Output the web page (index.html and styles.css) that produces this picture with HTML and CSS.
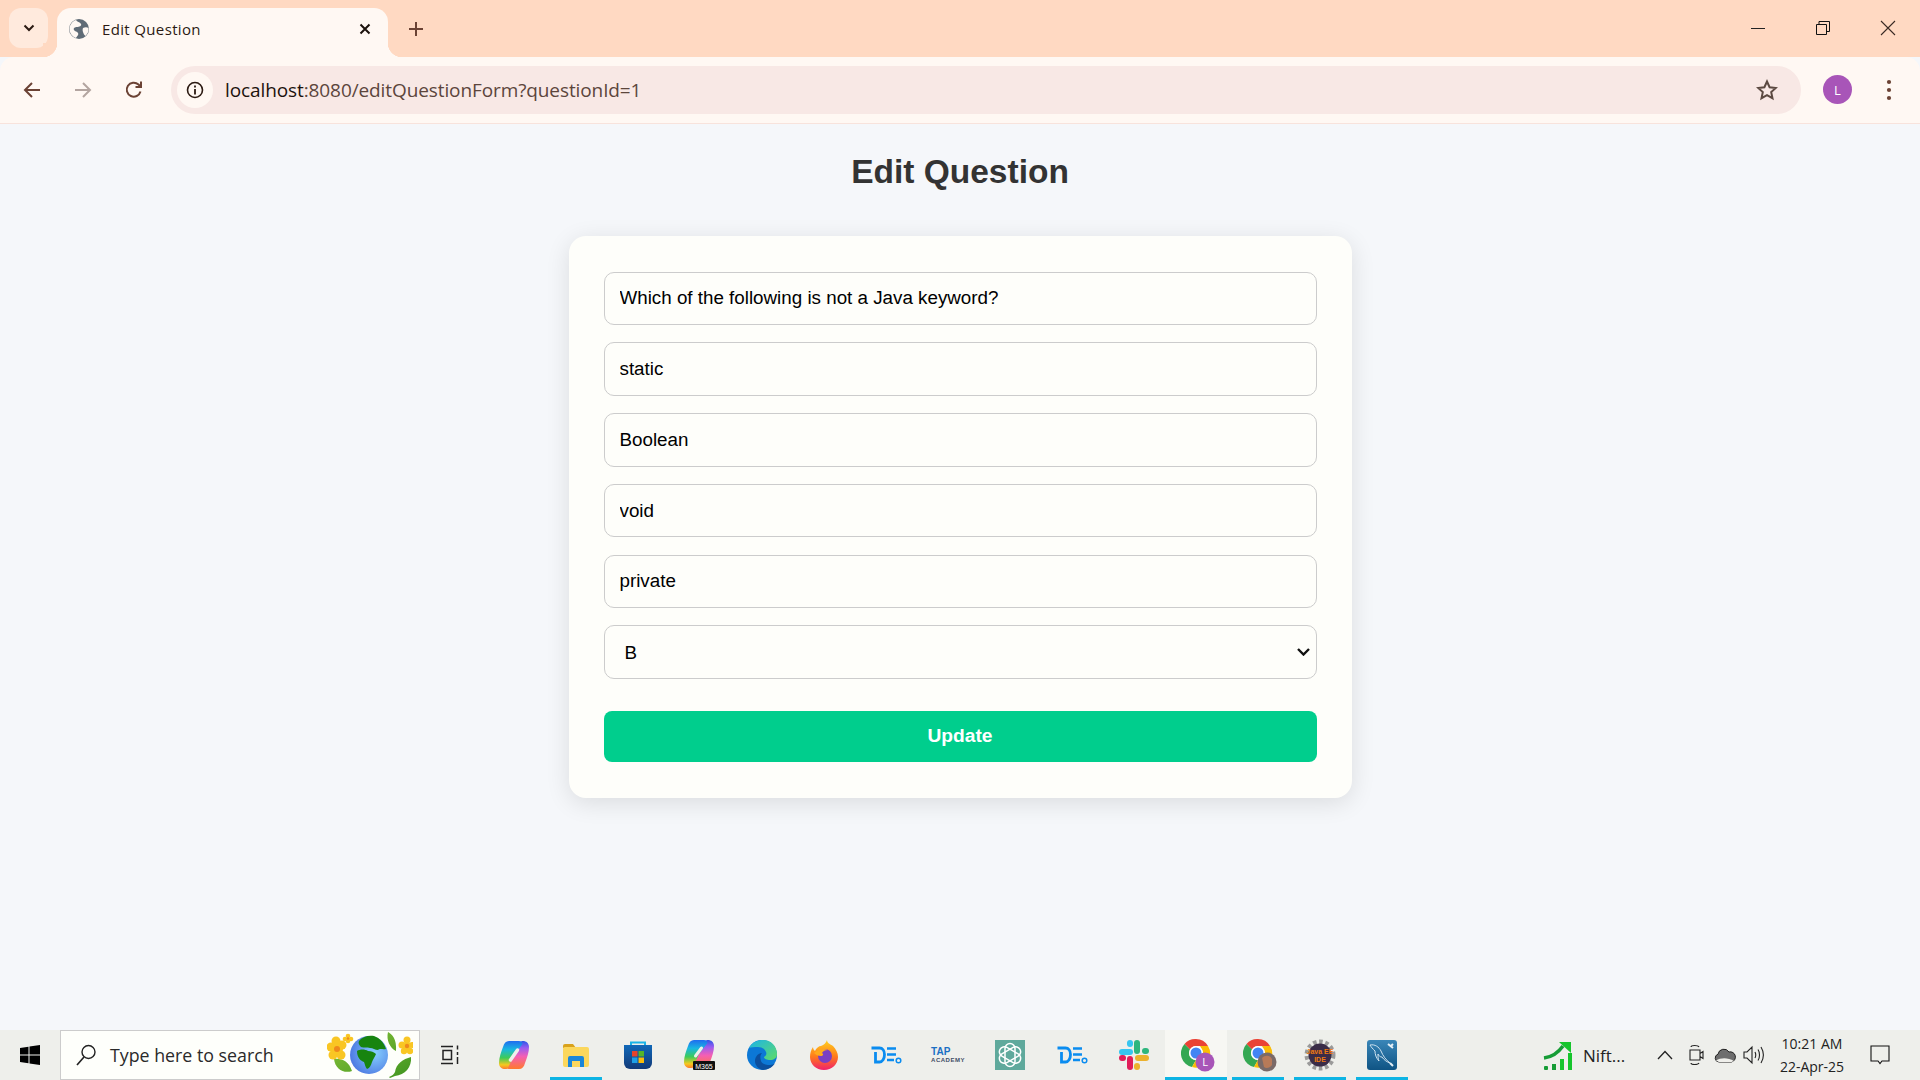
FILE: index.html
```html
<!DOCTYPE html>
<html lang="en">
<head>
  <meta charset="UTF-8" />
  <title>Edit Question</title>
  <link rel="stylesheet" href="styles.css">
</head>
<body>
  <header class="browser">
    <div class="tabstrip">
      <button class="tab-search">
        <svg width="14" height="14" viewBox="0 0 14 14"><path d="M2.5 4.5 7 9l4.500-4.500" fill="none" stroke="#2b1a12" stroke-width="2"/></svg>
      </button>
      <div class="tab">
        <svg class="favicon" width="20" height="20" viewBox="0 0 20 20"><circle cx="10" cy="10" r="10" fill="#5f6b76"/><path d="M7 1c1 2 4 2 5 4s-2 3-4 3-4 1-3 3 3 1 4 3-1 3-2 5c-3-1-6-4-6.500-8C0 7 3 2 7 1zM14 9c2-1 4-1 5.500 0 .5 3-1 6-3 8-1-1-2-2-2.500-4-.5-1-.5-3 0-4z" fill="#fff8f3"/></svg>
        <span class="tab-title">Edit Question</span>
        <svg class="tab-close" width="14" height="14" viewBox="0 0 14 14"><path d="M2.500 2.500l9 9m0-9-9 9" stroke="#1c120c" stroke-width="2"/></svg>
      </div>
      <svg class="new-tab" width="16" height="16" viewBox="0 0 16 16"><path d="M8 1v14M1 8h14" stroke="#6b4234" stroke-width="2"/></svg>
      <div class="window-btns">
        <svg width="16" height="16" viewBox="0 0 16 16"><path d="M1 8.500h14" stroke="#222" stroke-width="1"/></svg>
        <svg width="16" height="16" viewBox="0 0 16 16"><path d="M1.500 4.500h10v10h-10zM4 4.500V1.500h10.500v10h-3" fill="none" stroke="#111" stroke-width="1"/></svg>
        <svg width="16" height="16" viewBox="0 0 16 16"><path d="M1 1l14 14m0-14L1 15" stroke="#3a2a24" stroke-width="1.100"/></svg>
      </div>
    </div>
    <div class="toolbar">
      <svg class="nav-icon" width="20" height="20" viewBox="0 0 20 20"><path d="M18 10H3m7-7-7 7 7 7" fill="none" stroke="#6b4234" stroke-width="2"/></svg>
      <svg class="nav-icon" width="20" height="20" viewBox="0 0 20 20"><path d="M2 10h15m-7-7 7 7-7 7" fill="none" stroke="#b3a5a0" stroke-width="2"/></svg>
      <svg class="nav-icon" width="20" height="20" viewBox="0 0 20 20"><path d="M16.500 11.500A7 7 0 1 1 14.500 4.500L17 7M17 1.500V7h-5.500" fill="none" stroke="#6b4234" stroke-width="2"/></svg>
      <div class="omnibox">
        <span class="site-info">
          <svg width="18" height="18" viewBox="0 0 18 18"><circle cx="9" cy="9" r="7.500" fill="none" stroke="#2b1a12" stroke-width="1.600"/><path d="M9 8v5.500M9 4.500v2" stroke="#2b1a12" stroke-width="1.800"/></svg>
        </span>
        <span class="url"><b>localhost</b>:8080/editQuestionForm?questionId=1</span>
        <svg class="star" width="22" height="22" viewBox="0 0 22 22"><path d="M11 2.500l2.600 5.700 6.200.7-4.600 4.200 1.300 6.100L11 16.100l-5.500 3.100 1.300-6.100-4.600-4.200 6.200-.7z" fill="none" stroke="#5c4a42" stroke-width="2"/></svg>
      </div>
      <span class="avatar">L</span>
      <svg class="menu-dots" width="6" height="22" viewBox="0 0 6 22"><circle cx="3" cy="3" r="2.100" fill="#6b4234"/><circle cx="3" cy="11" r="2.100" fill="#6b4234"/><circle cx="3" cy="19" r="2.100" fill="#6b4234"/></svg>
    </div>
  </header>

  <main class="page">
    <h1>Edit Question</h1>
    <form class="card">
      <input type="text" value="Which of the following is not a Java keyword?">
      <input type="text" value="static">
      <input type="text" value="Boolean">
      <input type="text" value="void">
      <input type="text" value="private">
      <select>
        <option>A</option>
        <option selected>B</option>
        <option>C</option>
        <option>D</option>
      </select>
      <button type="button" class="update-btn">Update</button>
    </form>
  </main>

  <footer class="taskbar">
    <div class="start">
      <svg width="20" height="20" viewBox="0 0 20 20"><path d="M0 3l8.500-1.200V9.500H0zM9.500 1.600 20 0v9.500H9.500zM0 10.500h8.500v7.700L0 17zM9.500 10.500H20V20L9.500 18.400z" fill="#000"/></svg>
    </div>
    <div class="search-box">
      <svg width="24" height="24" viewBox="0 0 24 24"><circle cx="14.500" cy="9" r="6.500" fill="none" stroke="#222" stroke-width="1.400"/><path d="M10 14 3 22" stroke="#222" stroke-width="1.600"/></svg>
      <span class="search-text">Type here to search</span>
      <svg class="search-art" width="86" height="50" viewBox="0 0 86 50">
        <defs><radialGradient id="globeG" cx=".65" cy=".45" r=".7"><stop offset="0" stop-color="#86d0ff"/><stop offset="1" stop-color="#4a74e0"/></radialGradient><linearGradient id="leafG" x1="0" y1="0" x2="1" y2="1"><stop offset="0" stop-color="#8ac43a"/><stop offset="1" stop-color="#3f9420"/></linearGradient></defs>
        <path d="M7 29c7-1 15 2 18 12-8 3-17-2-18-12zM62 47c3-1 5-3 6-5 1-8 8-13 16-15 1 10-6 18-16 19l-5 2zM61 2c4 2 9 7 8 19-6-3-10-11-8-19z" fill="url(#leafG)"/>
        <circle cx="42" cy="25" r="19" fill="url(#globeG)"/>
        <path d="M32 11c3-4 9-6 15-5 6 2 10 7 12 13-3 1-6-1-8 1-3 0-5-2-8-2-3-1-6 0-9-1-2-2-3-4-2-6zM30 21c3-2 8-2 11 0 3 0 6 1 8 3-1 3-3 5-4 8-1 3-2 6-5 7-2-2-2-5-3-7-3-1-7-4-7-11z" fill="#17840f"/>
        <g fill="#f9c623"><circle cx="4" cy="17" r="4.500"/><circle cx="15" cy="15" r="4.500"/><circle cx="6" cy="25" r="4.500"/><circle cx="14" cy="25" r="4.500"/><circle cx="9" cy="11" r="4.500"/><circle cx="21" cy="6" r="2.300"/><circle cx="24" cy="9" r="2.300"/><circle cx="21" cy="11" r="2.300"/><circle cx="18" cy="9" r="2.300"/><circle cx="75" cy="15" r="3.500"/><circle cx="85" cy="15" r="3"/><circle cx="80" cy="10" r="3.500"/><circle cx="77" cy="21" r="3.200"/><circle cx="83" cy="21" r="3.200"/></g>
        <circle cx="10" cy="19" r="6" fill="#f9c623"/><circle cx="10" cy="19" r="3" fill="#ee8a1c"/><circle cx="80" cy="16" r="4" fill="#f9c623"/><circle cx="80" cy="16" r="2.200" fill="#ee8a1c"/><circle cx="21" cy="8.500" r="1.200" fill="#ee8a1c"/>
      </svg>
    </div>
    <div class="task-icons">
      <div class="slot">
        <svg class="task-view" width="22" height="22" viewBox="0 0 22 22"><path d="M1 2.500h12M1 19.500h12M3 6.500h8.500v9H3zM17.500 1.500v4M17.500 8v3M17.500 13v7" fill="none" stroke="#222" stroke-width="1.500"/></svg>
      </div>
      <div class="slot">
        <svg width="30" height="28" viewBox="0 0 30 28"><defs><linearGradient id="cpA" x1="0" y1="0" x2="0" y2="1"><stop offset="0" stop-color="#1f6cf0"/><stop offset=".3" stop-color="#19b7e0"/><stop offset=".6" stop-color="#3ecb58"/><stop offset=".85" stop-color="#f6c91e"/><stop offset="1" stop-color="#ff7a2c"/></linearGradient><linearGradient id="cpB" x1="0" y1="0" x2="0" y2="1"><stop offset="0" stop-color="#2a58e8"/><stop offset=".25" stop-color="#9a5cf0"/><stop offset=".55" stop-color="#f45fb4"/><stop offset="1" stop-color="#ff7a2c"/></linearGradient></defs><path d="M20 28H10c-2 0-3-1-3.500-3L15 14l6-13c1-1 2-1 3-1 3 0 6 2 6 6 0 5-2 11-4 16-1 4-3 6-6 6z" fill="url(#cpB)"/><path d="M10 0h10c2 0 3 1 3.500 3L15 14 9 27c-1 1-2 1-3 1-3 0-6-2-6-6 0-5 2-11 4-16 1-4 3-6 6-6z" fill="url(#cpA)"/><path d="M11.500 19 18.500 9" stroke="#eeefeb" stroke-width="3.500" stroke-linecap="round"/></svg>
      </div>
      <div class="slot underlined">
        <svg width="28" height="28" viewBox="0 0 28 28"><path d="M1 5a2 2 0 0 1 2-2h8l3 4H1z" fill="#d9a21c"/><rect x="1" y="6" width="26" height="20" rx="2" fill="#fbd75c"/><path d="M6 26v-9a2 2 0 0 1 2-2h12a2 2 0 0 1 2 2v9h-4v-6h-8v6z" fill="#1a86d9"/></svg>
      </div>
      <div class="slot">
        <svg width="30" height="30" viewBox="0 0 30 30"><defs><linearGradient id="storeG" x1="0" y1="0" x2="0" y2="1"><stop offset="0" stop-color="#1068b8"/><stop offset="1" stop-color="#123a78"/></linearGradient></defs><path d="M8 5V2.500h14V5" fill="none" stroke="#19b4e8" stroke-width="2"/><path d="M1 5h28v18a6 6 0 0 1-6 6H7a6 6 0 0 1-6-6z" fill="url(#storeG)"/><rect x="9" y="11" width="5.500" height="5.500" fill="#e8442a"/><rect x="15.500" y="11" width="5.500" height="5.500" fill="#55b52a"/><rect x="9" y="17.500" width="5.500" height="5.500" fill="#1ea0e6"/><rect x="15.500" y="17.500" width="5.500" height="5.500" fill="#fbbc09"/></svg>
      </div>
      <div class="slot">
        <svg width="32" height="30" viewBox="0 0 32 30"><path d="M20 28H10c-2 0-3-1-3.500-3L15 14l6-13c1-1 2-1 3-1 3 0 6 2 6 6 0 5-2 11-4 16-1 4-3 6-6 6z" fill="url(#cpB)"/><path d="M10 0h10c2 0 3 1 3.500 3L15 14 9 27c-1 1-2 1-3 1-3 0-6-2-6-6 0-5 2-11 4-16 1-4 3-6 6-6z" fill="url(#cpA)"/><path d="M11.500 16 17.500 8" stroke="#eeefeb" stroke-width="3" stroke-linecap="round"/><rect x="9" y="21" width="22" height="9" rx="1" fill="#111"/><text x="20" y="28.500" class="tiny-label" text-anchor="middle">M365</text></svg>
      </div>
      <div class="slot">
        <svg width="30" height="30" viewBox="0 0 30 30"><defs><linearGradient id="edgeG" x1="0" y1="0" x2="1" y2="1"><stop offset="0" stop-color="#1cb4e8"/><stop offset="1" stop-color="#5fdc68"/></linearGradient></defs><circle cx="15" cy="15" r="15" fill="#0c78d6"/><path d="M2 8C5 2 11 0 16 0c8 0 14 6 14 14 0 4-3 6-7 6-3 0-6-1-6-3 2-1 3-3 2-5-1-3-4-5-8-5-4 0-7 0-9 1z" fill="url(#edgeG)"/><path d="M16 30c-5-1-8-5-8-9 0-4 3-8 7-8-2 2-2 5-1 8s5 4 9 4c2 0 4-1 5-2-2 4-7 7-12 7z" fill="#0b4f9e"/></svg>
      </div>
      <div class="slot">
        <svg width="30" height="32" viewBox="0 0 30 32"><defs><linearGradient id="foxG" x1="0" y1="0" x2="0" y2="1"><stop offset="0" stop-color="#ffd21e"/><stop offset=".55" stop-color="#ff7a1c"/><stop offset="1" stop-color="#f0206c"/></linearGradient></defs><path d="M18 1c0 3 3 4 6 6 3 3 5 7 5 11 0 7-6 13-14 13S1 25 1 18c0-4 1-7 3-10 0 2 1 3 2 4 1-3 4-5 6-5 3-1 5-3 6-6z" fill="url(#foxG)"/><circle cx="16" cy="17" r="7" fill="#7a3fc4"/><path d="M5 14c4-4 10-5 14-3-3 0-5 1-6 3 2 1 1 3-1 3-3 0-5-1-7-3z" fill="#ffa91c"/></svg>
      </div>
      <div class="slot">
        <svg width="32" height="18" viewBox="0 0 32 18"><path d="M1.500 2h8c3 0 5 2.500 5 6.500s-2 7.500-5 7.500h-4V6" fill="none" stroke="#0a8cf0" stroke-width="2.800"/><path d="M17 2.500h9M17 8.500h9M17 14h7" stroke="#0a8cf0" stroke-width="2.500"/><circle cx="28.500" cy="14.500" r="2.300" fill="none" stroke="#0a8cf0" stroke-width="1.500"/></svg>
      </div>
      <div class="slot">
        <div class="tap-logo"><span class="tap-top">TAP</span><span class="tap-bottom">ACADEMY</span></div>
      </div>
      <div class="slot">
        <svg width="30" height="30" viewBox="0 0 30 30"><rect width="30" height="30" fill="#5fa99c"/><g fill="none" stroke="#fff" stroke-width="1.500"><rect x="10" y="3.500" width="10" height="23" rx="5"/><rect x="10" y="3.500" width="10" height="23" rx="5" transform="rotate(60 15 15)"/><rect x="10" y="3.500" width="10" height="23" rx="5" transform="rotate(120 15 15)"/></g></svg>
      </div>
      <div class="slot">
        <svg width="32" height="18" viewBox="0 0 32 18"><path d="M1.500 2h8c3 0 5 2.500 5 6.500s-2 7.500-5 7.500h-4V6" fill="none" stroke="#0a8cf0" stroke-width="2.800"/><path d="M17 2.500h9M17 8.500h9M17 14h7" stroke="#0a8cf0" stroke-width="2.500"/><circle cx="28.500" cy="14.500" r="2.300" fill="none" stroke="#0a8cf0" stroke-width="1.500"/></svg>
      </div>
      <div class="slot">
        <svg width="30" height="30" viewBox="0 0 30 30"><g stroke-width="6" stroke-linecap="round" fill="none"><path d="M3 12h8" stroke="#36c5f0"/><path d="M11 3v1" stroke="#36c5f0"/><path d="M18 3v8" stroke="#2eb67d"/><path d="M27 11h-1" stroke="#2eb67d"/><path d="M27 18h-8" stroke="#ecb22e"/><path d="M18 27v-1" stroke="#ecb22e"/><path d="M11 27v-8" stroke="#e01e5a"/><path d="M3 18h1" stroke="#e01e5a"/></g></svg>
      </div>
      <div class="slot current">
        <svg class="chrome" width="34" height="34" viewBox="0 0 34 34"><path d="M15 1a14 14 0 0 1 12 7H15a7 7 0 0 0-6 3.500L3.500 6A14 14 0 0 1 15 1z" fill="#ea4335"/><path d="M3.500 6 9 11.500a7 7 0 0 0 6 10.500l-4 7A14 14 0 0 1 3.500 6z" fill="#34a853"/><path d="M27 8a14 14 0 0 1-16 21l4-7a7 7 0 0 0 6-10.500L19 8z" fill="#fbbc05"/><circle cx="15" cy="15" r="7" fill="#fff"/><circle cx="15" cy="15" r="5.500" fill="#4285f4"/><circle cx="24" cy="24" r="9.500" fill="#a855b8"/><text x="24" y="28" class="badge-label" text-anchor="middle">L</text></svg>
      </div>
      <div class="slot underlined">
        <svg class="chrome" width="34" height="34" viewBox="0 0 34 34"><path d="M15 1a14 14 0 0 1 12 7H15a7 7 0 0 0-6 3.500L3.500 6A14 14 0 0 1 15 1z" fill="#ea4335"/><path d="M3.500 6 9 11.500a7 7 0 0 0 6 10.500l-4 7A14 14 0 0 1 3.500 6z" fill="#34a853"/><path d="M27 8a14 14 0 0 1-16 21l4-7a7 7 0 0 0 6-10.500L19 8z" fill="#fbbc05"/><circle cx="15" cy="15" r="7" fill="#fff"/><circle cx="15" cy="15" r="5.500" fill="#4285f4"/><circle cx="24" cy="24" r="9.500" fill="#7a6a68"/><path d="M19 20c3-3 8-3 10 1v6c-2 3-6 4-8 2z" fill="#b87a58"/></svg>
      </div>
      <div class="slot underlined">
        <svg width="32" height="32" viewBox="0 0 32 32"><circle cx="16" cy="16" r="13" fill="none" stroke="#9a9a9a" stroke-width="5" stroke-dasharray="3.500 2.500"/><circle cx="16" cy="16" r="11.500" fill="#3a2c48"/><text x="16" y="15" class="java-label" text-anchor="middle">Java EE</text><text x="16" y="23" class="java-label" text-anchor="middle">IDE</text></svg>
      </div>
      <div class="slot underlined">
        <svg width="30" height="30" viewBox="0 0 30 30"><defs><linearGradient id="sqlG" x1="0" y1="0" x2="0" y2="1"><stop offset="0" stop-color="#3a86b8"/><stop offset="1" stop-color="#0f5484"/></linearGradient></defs><rect width="30" height="30" rx="3" fill="url(#sqlG)"/><path d="M3 5c5-1 9 2 11 6 2 5 5 9 9 12-3-1-6-3-8-6-2 0-3-1-4-3 0 3 0 5 1 7-3-3-4-7-4-10C6 9 4 7 3 5z" fill="none" stroke="#cfe3f0" stroke-width="1"/><path d="M21 4l5 4M26 4l-2 2M23 23l3 3" stroke="#e4eff6" stroke-width="2"/></svg>
      </div>
    </div>
    <div class="tray">
      <svg class="nifty-icon" width="30" height="30" viewBox="0 0 30 30"><path d="M1 18c8-1 14-5 19-12" fill="none" stroke="#169c36" stroke-width="3.500"/><path d="M16 2h12v11z" fill="#16c52c"/><rect x="1" y="26" width="4" height="4" rx="1" fill="#169c36"/><rect x="9" y="24" width="4" height="6" fill="#169c36"/><rect x="17" y="19" width="4" height="11" fill="#16c52c"/><rect x="25" y="13" width="4" height="17" fill="#16c52c"/></svg>
      <span class="nifty-text">Nift...</span>
      <span class="tray-item"><svg width="16" height="10" viewBox="0 0 16 10"><path d="M1 9l7-7.500L15 9" fill="none" stroke="#222" stroke-width="1.300"/></svg></span>
      <span class="tray-item"><svg width="16" height="22" viewBox="0 0 16 22"><path d="M3 3c0-2 7-2 8 0M3 19c0 2 7 2 8 0M2 6h10v10H2zM12 9.500l3-2v7l-3-2" fill="none" stroke="#222" stroke-width="1.100"/></svg></span>
      <span class="tray-item"><svg width="22" height="16" viewBox="0 0 22 16"><path d="M5 15a4 4 0 0 1-1-7.800A6 6 0 0 1 15 5a4.500 4.500 0 0 1 2.500 10z" fill="#6e6e6e" stroke="#222" stroke-width="1"/><path d="M2 13.500c5-3 12-3 18 .5l-2.500 1H5z" fill="#efefeb"/></svg></span>
      <span class="tray-item"><svg width="22" height="20" viewBox="0 0 22 20"><path d="M1 7h3l5-5v16l-5-5H1zM12 7c1 2 1 4 0 6M15 4.500c2 3 2 8 0 11M18 2c3 5 3 11 0 16" fill="none" stroke="#222" stroke-width="1.100"/></svg></span>
      <div class="clock"><span>10:21 AM</span><span>22-Apr-25</span></div>
      <span class="notify"><svg width="20" height="20" viewBox="0 0 20 20"><path d="M1 1h18v15h-7l-2 2.500L8 16H1z" fill="none" stroke="#111" stroke-width="1.100"/></svg></span>
    </div>
  </footer>
</body>
</html>
```

FILE: styles.css
```css
* {
  box-sizing: border-box;
}

body {
  margin: 0;
  height: 1080px;
  display: flex;
  flex-direction: column;
  overflow: hidden;
  background: #f5f7fa;
  font-family: "Liberation Sans", sans-serif;
}

/* browser chrome */
.browser {
  flex: none;
}

.tabstrip {
  height: 57px;
  display: flex;
  align-items: flex-end;
  background: #ffd9c2;
  padding-left: 9px;
}

.tab-search {
  width: 39px;
  height: 40px;
  margin-bottom: 9px;
  border: none;
  border-radius: 12px;
  background: #ffeadd;
  display: flex;
  align-items: center;
  justify-content: center;
  padding: 0;
}

.tab {
  position: relative;
  width: 331px;
  height: 49px;
  margin-left: 9px;
  padding: 0 16px 8px 12px;
  display: flex;
  align-items: center;
  background: #fff8f3;
  border-radius: 14px 14px 0 0;
}

.tab::before,
.tab::after {
  content: "";
  position: absolute;
  bottom: 0;
  width: 14px;
  height: 14px;
}

.tab::before {
  left: -14px;
  background: radial-gradient(circle at 0 0, #ffd9c2 14px, #fff8f3 14.500px);
}

.tab::after {
  right: -14px;
  background: radial-gradient(circle at 100% 0, #ffd9c2 14px, #fff8f3 14.500px);
}

.tab-title {
  flex: 1;
  margin-left: 13px;
  font-family: "Open Sans", sans-serif;
  font-size: 15px;
  letter-spacing: 0.35px;
  color: #2b1a12;
}

.new-tab {
  margin: 0 0 20px 20px;
}

.window-btns {
  margin-left: auto;
  align-self: stretch;
  display: flex;
  align-items: flex-start;
  gap: 49px;
  padding: 20px 24px 0 0;
}

.toolbar {
  height: 67px;
  padding: 0 0 1px 22px;
  display: flex;
  align-items: center;
  background: #fff8f3;
  border-bottom: 1px solid #f8e3dc;
  border-radius: 14px 14px 0 0;
}

.nav-icon {
  margin-right: 31px;
}

.nav-icon + .nav-icon + .nav-icon {
  margin-right: 27px;
}

.omnibox {
  width: 1630px;
  height: 48px;
  display: flex;
  align-items: center;
  padding: 0 23px 0 6px;
  background: #f8e8e5;
  border-radius: 24px;
}

.site-info {
  width: 36px;
  height: 36px;
  border-radius: 50%;
  background: #fff8f3;
  display: flex;
  align-items: center;
  justify-content: center;
}

.url {
  flex: 1;
  margin-left: 12px;
  font-family: "Open Sans", sans-serif;
  font-size: 19px;
  color: #5c453c;
  letter-spacing: -0.1px;
}

.url b {
  font-weight: 400;
  color: #1c120c;
}

.avatar {
  width: 29px;
  height: 29px;
  margin-left: 22px;
  border-radius: 50%;
  background: #a855b8;
  color: #fff;
  font-family: "Open Sans", sans-serif;
  font-size: 13px;
  display: flex;
  align-items: center;
  justify-content: center;
}

.menu-dots {
  margin-left: 34px;
}

/* page */
.page {
  flex: 1;
  padding-top: 28px;
}

h1 {
  margin: 0 0 44px;
  height: 40px;
  line-height: 40px;
  font-size: 33.500px;
  font-weight: 700;
  text-align: center;
  color: #333;
}

.card {
  width: 783px;
  margin: 0 auto;
  padding: 35.500px 35px 36px;
  display: flex;
  flex-direction: column;
  gap: 17.300px;
  background: #fefefa;
  border-radius: 17px;
  box-shadow: 0 5px 24px rgba(0, 0, 0, 0.11);
}

.card input,
.card select {
  width: 100%;
  height: 53.500px;
  padding: 0 15px;
  border: 1.200px solid #ccc;
  border-radius: 10px;
  background-color: #fefefa;
  color: #000;
  font-family: "Liberation Sans", sans-serif;
  font-size: 18.800px;
}

.card select {
  padding-left: 20px;
  appearance: none;
  background-image: url("data:image/svg+xml,%3Csvg xmlns='http://www.w3.org/2000/svg' width='13' height='8'%3E%3Cpath d='M1 1l5.500 5.500L12 1' fill='none' stroke='%23111' stroke-width='2.400'/%3E%3C/svg%3E");
  background-repeat: no-repeat;
  background-position: right 6px center;
}

.update-btn {
  height: 51px;
  margin-top: 14.700px;
  border: none;
  border-radius: 8px;
  background: #00ce8d;
  color: #fff;
  font-family: "Liberation Sans", sans-serif;
  font-size: 19.200px;
  font-weight: 700;
}

/* windows taskbar */
.taskbar {
  flex: none;
  height: 50px;
  display: flex;
  align-items: stretch;
  background: #eeefeb;
}

.start {
  width: 60px;
  display: flex;
  align-items: center;
  justify-content: center;
}

.search-box {
  width: 360px;
  display: flex;
  align-items: center;
  padding-left: 13px;
  background: #fefffb;
  border: 1px solid #ccc;
}

.search-text {
  flex: 1;
  margin-left: 12px;
  font-family: "Open Sans", sans-serif;
  font-size: 17.800px;
  color: #2a2a2a;
}

.search-art {
  margin-right: 6px;
}

.task-icons {
  display: flex;
  margin-left: 1px;
}

.slot {
  position: relative;
  width: 62px;
  display: flex;
  align-items: center;
  justify-content: center;
}

.slot.underlined::after,
.slot.current::after {
  content: "";
  position: absolute;
  bottom: 0;
  height: 3px;
  background: #0db4e4;
}

.slot.underlined::after {
  left: 5px;
  right: 5px;
}

.slot.current {
  background: #f7f7f3;
}

.slot.current::after {
  left: 0;
  right: 0;
}

.task-view {
  margin-right: 2px;
}

.chrome {
  margin-left: 3px;
}

.tiny-label {
  font-family: "Liberation Sans", sans-serif;
  font-size: 7px;
  fill: #fff;
}

.badge-label {
  font-family: "Open Sans", sans-serif;
  font-size: 11px;
  fill: #fff;
}

.java-label {
  font-family: "Liberation Sans", sans-serif;
  font-size: 7px;
  font-weight: 700;
  fill: #f07a10;
}

.tap-logo {
  display: flex;
  flex-direction: column;
  line-height: 1;
  font-weight: 700;
}

.tap-top {
  font-size: 10px;
  color: #1c6fc4;
}

.tap-bottom {
  font-size: 6px;
  letter-spacing: 0.500px;
  color: #3d4d66;
}

.tray {
  margin-left: auto;
  padding-right: 16px;
  display: flex;
  align-items: center;
}

.nifty-text {
  width: 67px;
  margin-left: 10px;
  font-family: "Open Sans", sans-serif;
  font-size: 17px;
  color: #222;
}

.nifty-text + .tray-item {
  margin-right: 2px;
}

.tray-item {
  width: 29px;
  display: flex;
  align-items: center;
  justify-content: center;
}

.clock {
  width: 88px;
  display: flex;
  flex-direction: column;
  align-items: center;
  gap: 5px;
  font-family: "Open Sans", sans-serif;
  font-size: 14px;
  line-height: 18px;
  color: #222;
}

.notify {
  width: 48px;
  display: flex;
  justify-content: center;
}
```
